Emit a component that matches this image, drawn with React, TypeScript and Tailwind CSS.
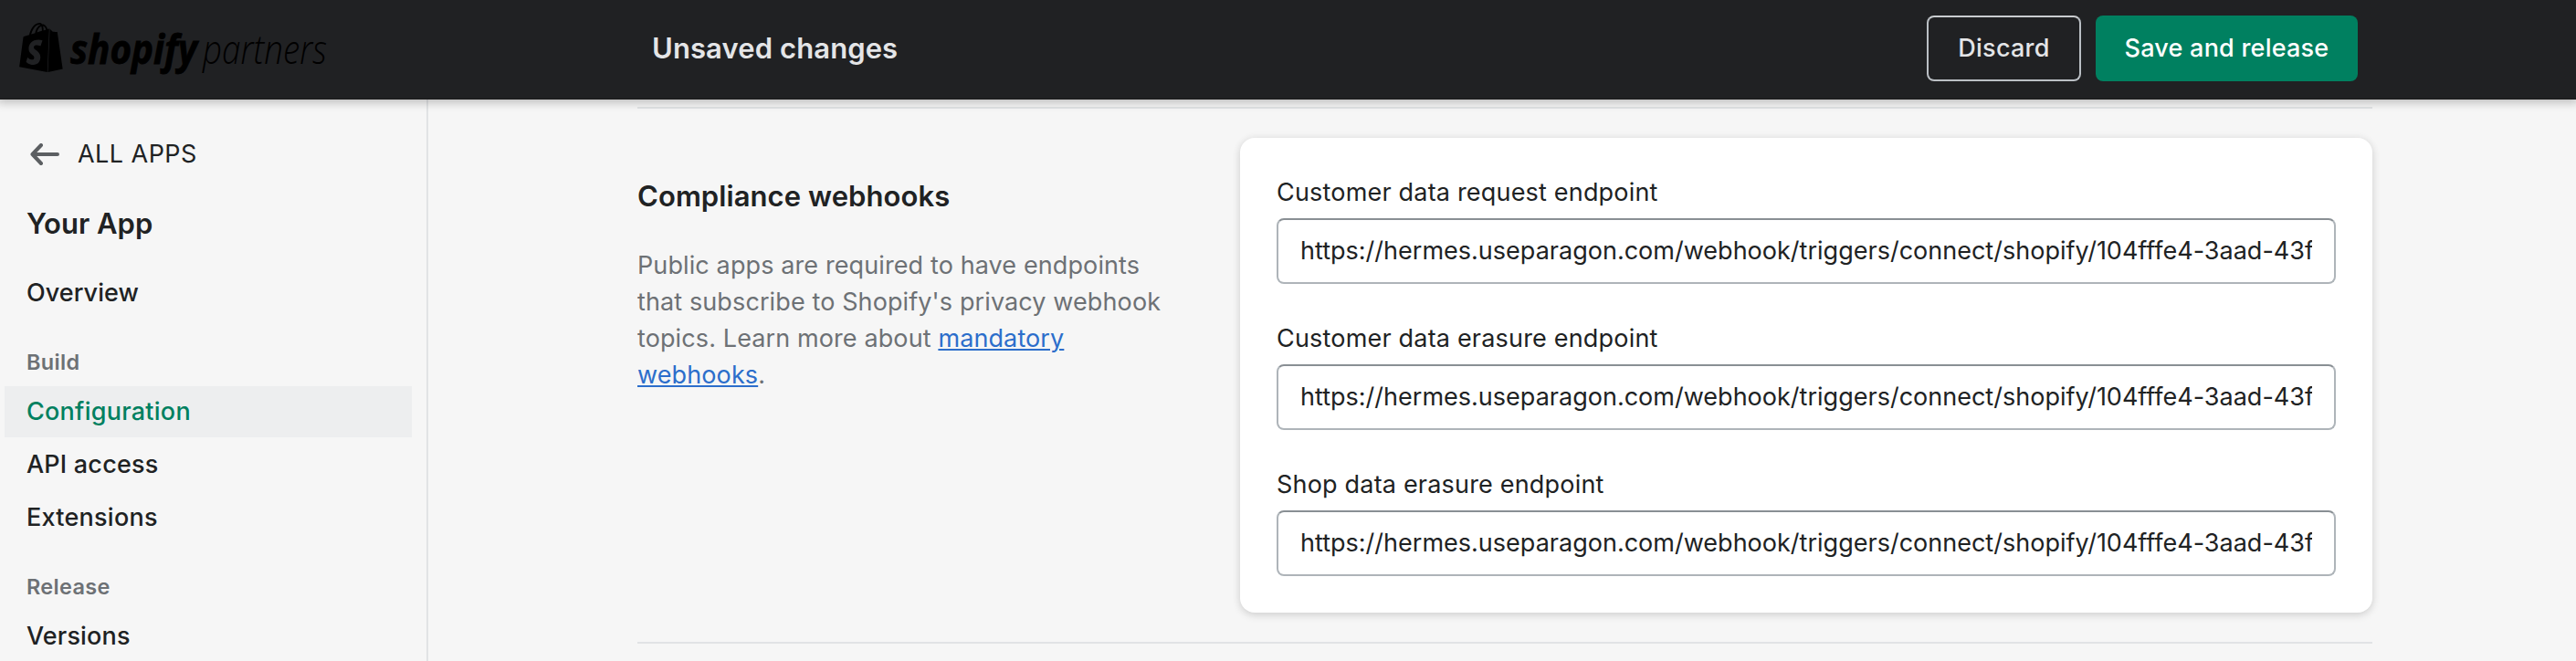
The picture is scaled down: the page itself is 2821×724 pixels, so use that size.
import { SiShopify } from "react-icons/si";

const URL = "https://hermes.useparagon.com/webhook/triggers/connect/shopify/104fffe4-3aad-43f0";

function Logo() {
  return (
    <div className="flex h-full w-[400px] items-start pt-[25px] pl-[18px]">
      <SiShopify className="h-[54px] w-[54px] shrink-0 text-black" preserveAspectRatio="none" />
      <svg width="300" height="80" viewBox="0 0 300 80" className="-ml-[3px] shrink-0 overflow-visible" fill="#000" fontFamily="Open Sans, sans-serif" fontStyle="italic">
        <text x="8" y="45" fontSize="44" fontWeight="700" stroke="#000" strokeWidth="0.8" textLength="139" lengthAdjust="spacingAndGlyphs">shopify</text>
        <text x="153" y="45" fontSize="44" fontWeight="300" textLength="136" lengthAdjust="spacingAndGlyphs">partners</text>
      </svg>
    </div>
  );
}

function Item({ label, active, spacing }: { label: string; active?: boolean; spacing: string }) {
  return (
    <a className={`ml-[5px] flex h-[56px] w-[446px] items-center pl-[24px] text-[27px] leading-[40px] font-medium ${spacing} ${active ? "bg-[#edeeef] text-[#008060]" : "text-[#202223]"}`}>
      {label}
    </a>
  );
}

function Section({ label }: { label: string }) {
  return <div className="pl-[29px] text-[23.5px] leading-[32px] font-semibold tracking-[0.3px] text-[#6d7175]">{label}</div>;
}

function Field({ label }: { label: string }) {
  return (
    <label className="block">
      <span className="block h-[40px] text-[27px] leading-[40px] tracking-[0.19px] whitespace-nowrap">{label}</span>
      <span className="mt-[8px] flex h-[72px] items-center overflow-hidden rounded-[8px] border-2 border-[#aeb4b9] border-t-[#898f94] bg-white px-[24px]">
        <span className="block w-full overflow-hidden text-[27px] leading-[40px] tracking-[0.01px] whitespace-nowrap">{URL}</span>
      </span>
    </label>
  );
}

export default function App() {
  return (
    <div className="flex h-[724px] w-[2821px] flex-col overflow-hidden bg-[#f6f6f6] font-['Inter',sans-serif] text-[#202223]">
      <header className="z-10 flex h-[109px] shrink-0 border-b border-[#1a1a1b] bg-[#202123] shadow-[0_0_10px_3px_rgba(0,0,0,0.25)]">
        <Logo />
        <div className="flex flex-1 items-start pt-[17px] pr-[239px] pl-[314px]">
          <h2 className="flex h-[72px] flex-1 items-center text-[31px] font-semibold tracking-[0.1px] text-[#e4e5e7]">Unsaved changes</h2>
          <button className="mr-[16px] flex h-[72px] w-[169px] items-center justify-center rounded-[8px] border-2 border-[#babfc4] border-t-[#c9cccf] text-[27px] font-medium tracking-[0.25px] text-[#e4e5e7]">Discard</button>
          <button className="flex h-[72px] w-[287px] items-center justify-center rounded-[8px] bg-[#008060] text-[27px] font-medium tracking-[0.22px] text-white">Save and release</button>
        </div>
      </header>
      <div className="flex min-h-0 flex-1">
        <nav className="flex w-[469px] shrink-0 flex-col border-r-2 border-[#e1e3e5]">
          <a className="mt-[40px] flex h-[40px] items-center pl-[33px] text-[27px] leading-[40px]">
            <svg width="32" height="24" viewBox="0 0 32 24" fill="none" stroke="#5c5f62" strokeWidth="4" strokeLinecap="round" strokeLinejoin="round">
              <path d="M30 12H2.5M12 2 2.5 12 12 22" />
            </svg>
            <span className="ml-[20px] tracking-[0.45px]">ALL APPS</span>
          </a>
          <h1 className="mt-[36px] mb-px pl-[29px] text-[31px] leading-[40px] font-semibold">Your App</h1>
          <div className="mt-[27px]"><Item label="Overview" spacing="tracking-[0.05px]" /></div>
          <div className="mt-[32px] mb-[10px]"><Section label="Build" /></div>
          <div className="flex flex-col gap-[2px]">
            <Item label="Configuration" active spacing="tracking-[0.25px]" />
            <Item label="API access" spacing="tracking-[0.2px]" />
            <Item label="Extensions" spacing="tracking-[0.25px]" />
          </div>
          <div className="mt-[32px] mb-[10px]"><Section label="Release" /></div>
          <Item label="Versions" spacing="tracking-[0.15px]" />
        </nav>
        <main className="ml-[229px] w-[1900px] shrink-0 pt-[8px]">
          <div className="flex h-[588px] border-y-2 border-[#e1e3e5]">
            <div className="w-[660px] pt-[76px]">
              <h2 className="text-[31px] leading-[40px] font-semibold tracking-[0.08px]">Compliance webhooks</h2>
              <p className="mt-[36px] text-[27px] leading-[40px] tracking-[0.11px] whitespace-nowrap text-[#6d7175]">
                Public apps are required to have endpoints
                <br />
                that subscribe to Shopify's privacy webhook
                <br />
                topics. Learn more about{" "}
                <a className="text-[#2c6ecb] underline decoration-2 underline-offset-2">
                  mandatory
                  <br />
                  webhooks
                </a>
                .
              </p>
            </div>
            <section className="mt-[32px] flex h-[520px] w-[1240px] flex-col gap-[40px] rounded-[16px] bg-white p-[40px] shadow-[0_0_10px_rgba(23,24,24,0.06),0_3px_10px_rgba(0,0,0,0.12)]">
              <Field label="Customer data request endpoint" />
              <Field label="Customer data erasure endpoint" />
              <Field label="Shop data erasure endpoint" />
            </section>
          </div>
        </main>
      </div>
    </div>
  );
}
